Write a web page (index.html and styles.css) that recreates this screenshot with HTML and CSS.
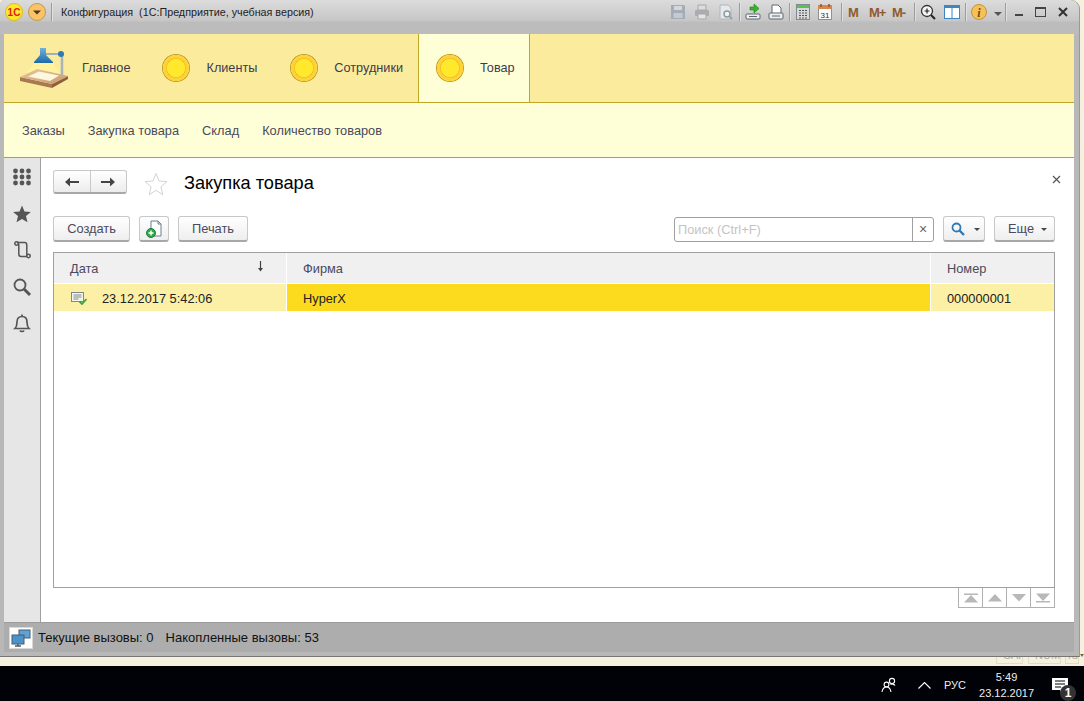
FILE: index.html
```html
<!DOCTYPE html>
<html>
<head>
    <meta charset="utf-8">
    <title>Конфигурация (1С:Предприятие, учебная версия)</title>
    <link rel="stylesheet" href="styles.css">
</head>
<body>
<div class="screen">
    <div class="window">
        <!-- title bar -->
        <div class="titlebar">
            <svg class="logo" width="18" height="18" viewBox="0 0 18 18">
                <circle cx="9" cy="9" r="8.5" fill="#fde82c" stroke="#e2b91c"/>
                <text x="9" y="12.5" class="logo-text" text-anchor="middle">1С</text>
            </svg>
            <svg class="menu-btn" width="18" height="18" viewBox="0 0 18 18">
                <circle cx="9" cy="9" r="8.5" fill="#fbc266" stroke="#bd9a55"/>
                <path d="M5 7.5h8L9 11.5z" fill="#4a3a20"/>
            </svg>
            <span class="sep sep-title"></span>
            <span class="title-text">Конфигурация&nbsp; (1С:Предприятие, учебная версия)</span>

            <div class="tools">
                <div class="tool-group tool-group-g1">
                    <svg width="16" height="16" viewBox="0 0 16 16"><path d="M1 1h13l1 1v13H1z" fill="#a4adb5"/><path d="M4 2h8v4H4z" fill="#d4d8db"/><path d="M3.500 9h9v5h-9z" fill="#c4cacf"/></svg>
                    <svg width="16" height="16" viewBox="0 0 16 16"><path d="M4 1h8v5H4z" fill="#dcdcdc" stroke="#a8a8a8"/><rect x="1" y="6" width="14" height="6" rx="1" fill="#a9adb1"/><path d="M4 10h8v5H4z" fill="#e4e4e4" stroke="#a8a8a8"/></svg>
                    <svg width="16" height="16" viewBox="0 0 16 16"><path d="M2 1h8l3 3v11H2z" fill="#e6e8ea" stroke="#b0b6bb"/><circle cx="9" cy="10" r="3" fill="#eef2f4" stroke="#8a98a3" stroke-width="1.4"/><path d="M11 12l3 3" stroke="#8a98a3" stroke-width="1.6"/></svg>
                </div>
                <span class="sep"></span>
                <div class="tool-group tool-group-g2">
                    <svg width="16" height="16" viewBox="0 0 16 16"><path d="M5 3h4V0l5 4.5L9 9V6H5z" fill="#39b22d" stroke="#1e7d18" stroke-width=".6"/><rect x="1" y="10" width="14" height="5" rx="1" fill="#f0f0f0" stroke="#5d6670"/><path d="M4 12.5h8" stroke="#5d6670"/></svg>
                    <svg width="16" height="16" viewBox="0 0 16 16"><path d="M4 1h6l3 3v6H4z" fill="#fff" stroke="#5d6670"/><rect x="1" y="9" width="14" height="6" rx="1" fill="#eee" stroke="#5d6670"/><path d="M4 12h8" stroke="#5d6670"/></svg>
                </div>
                <span class="sep"></span>
                <div class="tool-group tool-group-g3">
                    <svg width="16" height="16" viewBox="0 0 16 16"><rect x="1.5" y=".5" width="13" height="15" fill="#d6dadd" stroke="#7f8a92"/><rect x="2" y="1" width="12" height="3" fill="#5cc04e"/><path d="M4 6h2v1H4zm3 0h2v1H7zm3 0h2v1h-2zM4 8.500h2v1H4zm3 0h2v1H7zm3 0h2v1h-2zM4 11h2v1H4zm3 0h2v1H7zm3 0h2v1h-2zM4 13.500h2v1H4zm3 0h2v1H7zm3 0h2v1h-2z" fill="#555"/></svg>
                    <svg width="16" height="16" viewBox="0 0 16 16"><rect x="1.500" y="1.500" width="13" height="14" fill="#fbfbfb" stroke="#8d8f90"/><rect x="1" y="1" width="14" height="4" fill="#d8844b"/><path d="M4 0v3M12 0v3" stroke="#8a5230" stroke-width="1.500"/><text x="8" y="13.500" class="cal-text" text-anchor="middle">31</text></svg>
                </div>
                <span class="sep"></span>
                <div class="mem">
                    <span class="mem-m">M</span>
                    <span class="mem-plus">M+</span>
                    <span class="mem-minus">M-</span>
                </div>
                <span class="sep"></span>
                <div class="tool-group tool-group-g5">
                    <svg width="16" height="16" viewBox="0 0 16 16"><circle cx="7" cy="7" r="5.500" fill="#f6f6f6" stroke="#333" stroke-width="1.300"/><path d="M4.500 7h5M7 4.500v5" stroke="#222" stroke-width="1.200"/><path d="M11 11l4 4" stroke="#222" stroke-width="2"/></svg>
                    <svg width="16" height="16" viewBox="0 0 16 16"><rect x=".5" y="1.500" width="15" height="13" fill="#fff" stroke="#3c86c4"/><rect x="1" y="2" width="14" height="2" fill="#3c86c4"/><path d="M8 3v11" stroke="#3c86c4"/></svg>
                </div>
                <span class="sep"></span>
                <svg width="16" height="16" viewBox="0 0 16 16"><circle cx="8" cy="8" r="7.500" fill="#f6c156" stroke="#c49238"/><text x="8" y="12.500" class="info-text" text-anchor="middle">i</text></svg>
                <svg class="info-arrow" width="8" height="5" viewBox="0 0 8 5"><path d="M0 0h8L4 4z" fill="#555"/></svg>
                <span class="sep sep-end"></span>
                <span class="win-min"></span>
                <span class="win-max"></span>
                <svg class="win-close" width="10" height="10" viewBox="0 0 10 10"><path d="M1 1l8 8M9 1l-8 8" stroke="#333" stroke-width="2"/></svg>
            </div>
        </div>

        <div class="client">
            <!-- sections -->
            <div class="tabs">
                <div class="tab tab-main">
                    <svg width="48" height="42" viewBox="0 0 48 42">
                        <defs>
                            <linearGradient id="wood" x1="0" y1="0" x2="1" y2="1"><stop offset="0" stop-color="#e8c79c"/><stop offset="1" stop-color="#c89a6c"/></linearGradient>
                            <linearGradient id="shade" x1="0" y1="0" x2="0" y2="1"><stop offset="0" stop-color="#6fb2de"/><stop offset="1" stop-color="#1f6aa5"/></linearGradient>
                        </defs>
                        <path d="M15 15h17l8 11H6z" fill="#fff3a0"/>
                        <path d="M0 30l32 7v4L0 34z" fill="#a87a52"/>
                        <path d="M32 37l16-8v3L32 41z" fill="#8c6040"/>
                        <path d="M0 30l17-8 31 7-16 8z" fill="url(#wood)"/>
                        <path d="M8 29.500l11-5 20 4-9 5.500z" fill="#fdf7e0"/>
                        <path d="M25 7h16" stroke="#9fb0bb" stroke-width="2"/>
                        <path d="M42 8v20" stroke="#a8b4bc" stroke-width="2.500"/>
                        <circle cx="41" cy="7" r="3" fill="#2c79b3"/>
                        <path d="M20 1h6v7l7 7v1H14v-1l6-7z" fill="url(#shade)"/>
                    </svg>
                    <span>Главное</span>
                </div>
                <div class="tab"><span class="bullet"></span><span>Клиенты</span></div>
                <div class="tab"><span class="bullet"></span><span>Сотрудники</span></div>
                <div class="tab tab-active"><span class="bullet"></span><span>Товар</span></div>
            </div>
            <div class="subnav">
                <span>Заказы</span>
                <span>Закупка товара</span>
                <span>Склад</span>
                <span>Количество товаров</span>
            </div>

            <div class="workspace">
                <div class="rail">
                    <svg width="20" height="20" viewBox="0 0 20 20" fill="#555">
                        <circle cx="3.500" cy="4" r="2.400"/><circle cx="10" cy="4" r="2.400"/><circle cx="16.500" cy="4" r="2.400"/>
                        <circle cx="3.500" cy="10" r="2.400"/><circle cx="10" cy="10" r="2.400"/><circle cx="16.500" cy="10" r="2.400"/>
                        <circle cx="3.500" cy="16" r="2.400"/><circle cx="10" cy="16" r="2.400"/><circle cx="16.500" cy="16" r="2.400"/>
                    </svg>
                    <svg width="20" height="20" viewBox="0 0 20 20"><path d="M10 1.500l2.500 5.900 6.400.5-4.900 4.200 1.500 6.200L10 15l-5.500 3.300L6 12.100 1.100 7.900l6.400-.5z" fill="#555"/></svg>
                    <svg width="20" height="20" viewBox="0 0 20 20" fill="none" stroke="#555" stroke-width="1.500"><path d="M5 2.500h8c1.500 0 1.800 1.500 1.800 3v8.500c0 1.500.8 2.500 2 2.500H9c-1.500 0-2.200-1-2.200-2.500V5.500C6.800 4 6.500 2.500 5 2.500z"/><circle cx="4.500" cy="3.500" r="1.700" fill="#e6e6e6"/><circle cx="16.500" cy="16" r="1.700" fill="#e6e6e6"/></svg>
                    <svg width="20" height="20" viewBox="0 0 20 20" fill="none" stroke="#555"><circle cx="8" cy="8" r="5.500" stroke-width="1.800"/><path d="M12 12l6 6" stroke-width="3"/></svg>
                    <svg width="20" height="20" viewBox="0 0 20 20" fill="none" stroke="#555" stroke-width="1.700"><path d="M3 15.500c1.500-1.500 2-3 2-6.500 0-3.500 2-5.500 5-5.500s5 2 5 5.500c0 3.500.5 5 2 6.500z"/><path d="M10 1.500v2M8 17.500c.5 1.300 3.500 1.300 4 0"/></svg>
                </div>

                <div class="form">
                    <div class="form-head">
                        <div class="nav-buttons">
                            <button class="nav-btn"><svg width="16" height="12" viewBox="0 0 16 12"><path d="M1 6l5-4.500V5h9v2H6v3.500z" fill="#444"/></svg></button>
                            <button class="nav-btn"><svg width="16" height="12" viewBox="0 0 16 12"><path d="M15 6l-5-4.500V5H1v2h9v3.500z" fill="#444"/></svg></button>
                        </div>
                        <svg class="fav" width="24" height="24" viewBox="0 0 24 24"><path d="M12 1.500l3 7.500 8 .6-6.100 5.200 1.900 7.800L12 18.400l-6.800 4.200 1.900-7.800L1 9.600 9 9z" fill="#fff" stroke="#d4d4d4"/></svg>
                        <h1>Закупка товара</h1>
                        <svg class="form-close" width="9" height="9" viewBox="0 0 9 9"><path d="M1 1l7 7M8 1L1 8" stroke="#555" stroke-width="1.200"/></svg>
                    </div>

                    <div class="toolbar">
                        <button class="btn btn-create">Создать</button>
                        <button class="btn btn-icon">
                            <svg width="18" height="18" viewBox="0 0 18 18"><path d="M6 1h7l3 3v12H6z" fill="#fff" stroke="#6f7f8c"/><path d="M13 1v3h3" fill="none" stroke="#6f7f8c"/><circle cx="6" cy="13" r="4.500" fill="#2fa84a" stroke="#1c7c33"/><path d="M3.500 13h5M6 10.500v5" stroke="#fff" stroke-width="1.400"/></svg>
                        </button>
                        <button class="btn btn-print">Печать</button>
                        <div class="search">
                            <input type="text" placeholder="Поиск (Ctrl+F)">
                            <span class="search-clear">×</span>
                        </div>
                        <button class="btn btn-find">
                            <svg width="14" height="14" viewBox="0 0 14 14" fill="none" stroke="#2f7ab5"><circle cx="5.500" cy="5.500" r="4" stroke-width="1.800"/><path d="M8.500 8.500l4.500 4.500" stroke-width="2.400"/></svg>
                            <span class="caret"></span>
                        </button>
                        <button class="btn btn-more">Еще<span class="caret"></span></button>
                    </div>

                    <div class="grid">
                        <div class="grid-row grid-head">
                            <div class="cell cell-date">
                                Дата
                                <svg class="sort" width="7" height="11" viewBox="0 0 7 11"><path d="M3.500 0v9" stroke="#444" stroke-width="1.200"/><path d="M1 7h5l-2.500 3.500z" fill="#444"/></svg>
                            </div>
                            <div class="cell">Фирма</div>
                            <div class="cell">Номер</div>
                        </div>
                        <div class="grid-row grid-item">
                            <div class="cell cell-date">
                                <svg width="16" height="14" viewBox="0 0 16 14"><rect x=".5" y="1.500" width="12" height="9" fill="#f4f4f0" stroke="#7d8a8a"/><path d="M2.500 4h8M2.500 6h8M2.500 8h5" stroke="#7d8a8a"/><path d="M8.500 10.500l2.500 2.500 4.500-5" fill="none" stroke="#3aa53a" stroke-width="1.800"/></svg>
                                <span>23.12.2017 5:42:06</span>
                            </div>
                            <div class="cell cell-current">HyperX</div>
                            <div class="cell">000000001</div>
                        </div>
                    </div>

                    <div class="pager">
                        <span class="page-btn"><svg width="14" height="10" viewBox="0 0 14 10"><path d="M0 .5h14v1.500H0zM7 2l7 7.500H0z" fill="#b8b8b8"/></svg></span>
                        <span class="page-btn"><svg width="14" height="8" viewBox="0 0 14 8"><path d="M7 0l7 7.500H0z" fill="#b8b8b8"/></svg></span>
                        <span class="page-btn"><svg width="14" height="8" viewBox="0 0 14 8"><path d="M7 7.500L14 0H0z" fill="#b8b8b8"/></svg></span>
                        <span class="page-btn"><svg width="14" height="10" viewBox="0 0 14 10"><path d="M0 8h14v1.500H0zM7 8L14 .5H0z" fill="#b8b8b8"/></svg></span>
                    </div>
                </div>
            </div>

            <div class="statusbar">
                <span class="status-btn">
                    <svg width="20" height="18" viewBox="0 0 20 18">
                        <rect x="8" y="1" width="11" height="8" fill="#5ea3d6" stroke="#4d5d6a"/>
                        <rect x="1" y="6" width="12" height="9" fill="#4c93cb" stroke="#4d5d6a"/>
                        <path d="M4 17h6M7 15v2" stroke="#4d5d6a" stroke-width="1.500"/>
                    </svg>
                </span>
                <span class="status-calls">Текущие вызовы: 0</span>
                <span>Накопленные вызовы: 53</span>
            </div>
        </div>
    </div>

    <!-- what is left of the window behind -->
    <div class="peek">
        <span class="peek-cell peek-caps"><b>CAP</b></span>
        <span class="peek-cell peek-num"><b>NUM</b></span>
        <span class="peek-cell peek-lang"><b>ru</b></span>
        <span class="peek-mark"></span>
    </div>

    <div class="taskbar">
        <svg class="tray-people" width="16" height="16" viewBox="0 0 16 16" fill="none" stroke="#fff" stroke-width="1.100"><circle cx="11" cy="4" r="2.600"/><circle cx="5.500" cy="7.500" r="2.400"/><path d="M1 15c.5-3 2-5 4.500-5s4 2 4.500 5M9.500 7.500c1-.7 3.500-.7 4.500 1"/></svg>
        <svg class="tray-up" width="13" height="7" viewBox="0 0 13 7"><path d="M.5 6.500l6-6 6 6" fill="none" stroke="#fff" stroke-width="1.100"/></svg>
        <span class="tray-lang">РУС</span>
        <div class="clock">
            <span>5:49</span>
            <span>23.12.2017</span>
        </div>
        <div class="notify">
            <svg width="16" height="14" viewBox="0 0 16 14"><path d="M0 0h16v12h-6l-2 2v-2H0z" fill="#fff"/><path d="M3 3h10M3 6h10M3 9h6" stroke="#000" stroke-width="1"/></svg>
            <span class="notify-badge">1</span>
        </div>
    </div>
</div>
</body>
</html>
```

FILE: styles.css
```css
* {
    box-sizing: border-box;
}

html, body {
    margin: 0;
    height: 100%;
    overflow: hidden;
}

body {
    font-family: "Liberation Sans", Arial, sans-serif;
    font-size: 12.8px;
    background: #f5f1de;
}

svg {
    display: block;
    flex: none;
}

button {
    font: inherit;
}

.screen {
    display: flex;
    flex-direction: column;
    height: 701px;
}

.window {
    display: flex;
    flex-direction: column;
    width: 1080px;
    height: 657px;
    padding: 0 5px 0 4px;
    background: #b4b4b4;
    background-image: linear-gradient(#dcdcdc, #c6c6c6 21px, #bcbcbc 22px, #bcbcbc 34px, #b8b8b8 35px);
    border-right: 1px solid #9a9a9a;
    border-bottom: 1px solid #767676;
    border-radius: 5px 9px 0 0;
}

/* title bar */
.titlebar {
    display: flex;
    align-items: center;
    flex: none;
    height: 34px;
    padding-bottom: 10px;
    color: #222;
    font-size: 10.75px;
}

.logo {
    margin-left: 1px;
}

.logo-text {
    font: bold 10px "Liberation Sans", sans-serif;
    fill: #e0201a;
}

.menu-btn {
    margin-left: 5px;
}

.sep {
    flex: none;
    width: 1px;
    height: 18px;
    margin: 0 5px;
    background: #9c9c9c;
    box-shadow: 1px 0 0 #e0e0e0;
}

.sep-title {
    margin: 0 9px 0 5px;
}

.title-text {
    white-space: nowrap;
}

.tools {
    display: flex;
    align-items: center;
    margin-left: auto;
    padding-right: 6px;
}

.tool-group {
    display: flex;
    align-items: center;
}

.tool-group-g1 {
    gap: 8px;
}

.tool-group-g2 {
    gap: 7px;
}

.tool-group-g3 {
    gap: 6px;
    margin-right: 3px;
}

.tool-group-g5 {
    gap: 8px;
}

.cal-text {
    font: 8px "Liberation Sans", sans-serif;
    fill: #333;
}

.info-text {
    font: italic bold 12px "Liberation Serif", serif;
    fill: #6b4a14;
}

.mem {
    display: flex;
    padding: 0 1px;
    color: #8f5a2e;
    font-size: 13px;
    font-weight: bold;
    letter-spacing: -1px;
    white-space: nowrap;
}

.mem-m {
    width: 21px;
}

.mem-plus {
    width: 23px;
}

.mem-minus {
    width: 16px;
}

.info-arrow {
    margin: 4px 0 0 7px;
}

.sep-end {
    margin: 0 9px 0 3px;
}

.win-min {
    width: 8px;
    height: 2px;
    margin-top: 6px;
    background: #444;
}

.win-max {
    width: 11px;
    height: 10px;
    margin-left: 12px;
    border: 1px solid #444;
    border-top-width: 2px;
}

.win-close {
    margin-left: 12px;
}

/* client area */
.client {
    display: flex;
    flex-direction: column;
    flex: 1;
    min-height: 0;
}

.tabs {
    display: flex;
    flex: none;
    height: 69px;
    background: #fbeb9d;
    border-bottom: 1px solid #c1a726;
    color: #3c3c50;
    font-size: 12.7px;
}

.tab {
    display: flex;
    align-items: center;
    gap: 16px;
    padding: 0 14px 0 17px;
    border: solid transparent;
    border-width: 0 1px;
    white-space: nowrap;
}

.tab-main {
    gap: 14px;
    padding: 0 13px 0 15px;
}

.tab-active {
    background: #ffffd7;
    border-color: #c1a726;
    margin-bottom: -1px;
    border-bottom: 1px solid #c1a726;
}

.bullet {
    flex: none;
    width: 28px;
    height: 28px;
    border-radius: 50%;
    background: radial-gradient(circle closest-side, #ffe92a 0 63%, #f3c52b 66% 71%, #fdd23a 74% 93%, #c2a01e 96%);
}

.subnav {
    display: flex;
    align-items: center;
    gap: 23px;
    flex: none;
    height: 55px;
    padding: 1px 0 0 18px;
    background: #ffffd7;
    border-bottom: 1px solid #9a9a9a;
    color: #4a4a5a;
}

.workspace {
    display: flex;
    flex: 1;
    min-height: 0;
}

.rail {
    display: flex;
    flex-direction: column;
    align-items: center;
    gap: 16.500px;
    flex: none;
    width: 37px;
    padding: 9px 1px 0 0;
    background: #e6e6e6;
    border-right: 1px solid #a0a0a0;
}

.form {
    display: flex;
    flex-direction: column;
    flex: 1;
    min-width: 0;
    padding: 12px 19px 14px 12px;
    background: #fff;
}

.form-head {
    display: flex;
    align-items: center;
    flex: none;
    height: 24px;
    margin-bottom: 22px;
}

.nav-buttons {
    display: flex;
    width: 74px;
    height: 24px;
    background: linear-gradient(#fff, #ececec);
    border: 1px solid #c8c8c8;
    border-bottom: 2px solid #a8a8a8;
    border-radius: 3px;
}

.nav-btn {
    display: flex;
    align-items: center;
    justify-content: center;
    flex: 1;
    padding: 0;
    background: none;
    border: 0;
}

.nav-btn + .nav-btn {
    border-left: 1px solid #c8c8c8;
}

.fav {
    margin: 3px 0 0 17px;
}

h1 {
    margin: 3px 0 0 16px;
    color: #000;
    font-size: 18.200px;
    font-weight: normal;
}

.form-close {
    margin: -6px -6px 0 auto;
}

.toolbar {
    display: flex;
    align-items: center;
    flex: none;
    height: 26px;
    margin-bottom: 10px;
}

.btn {
    display: flex;
    align-items: center;
    justify-content: center;
    height: 26px;
    padding: 0;
    background: linear-gradient(#fff, #eeeeee);
    border: 1px solid #c8c8c8;
    border-bottom: 2px solid #a8a8a8;
    border-radius: 3px;
    color: #4a4a5e;
}

.btn-create {
    width: 77px;
}

.btn-icon {
    width: 30px;
    margin-left: 9px;
}

.btn-print {
    width: 70px;
    margin-left: 9px;
}

.search {
    display: flex;
    width: 260px;
    height: 25px;
    margin-left: auto;
    border: 1px solid #a0a0a0;
    border-radius: 3px;
}

.search input {
    flex: 1;
    min-width: 0;
    padding: 0 3px;
    border: 0;
    border-radius: 3px 0 0 3px;
    font: inherit;
    background: none;
}

.search input::placeholder {
    color: #c4c4c4;
    opacity: 1;
}

.search-clear {
    display: flex;
    align-items: center;
    justify-content: center;
    width: 21px;
    border-left: 1px solid #a0a0a0;
    color: #666;
    font-size: 14px;
}

.btn-find {
    gap: 9px;
    width: 42px;
    margin-left: 9px;
    padding-left: 2px;
}

.btn-more {
    gap: 7px;
    width: 61px;
    margin-left: 9px;
    padding-left: 6px;
}

.caret {
    width: 0;
    height: 0;
    margin-top: 2px;
    border: 3px solid transparent;
    border-top: 3px solid #444;
    border-bottom: 0;
}

/* list */
.grid {
    flex: 1;
    min-height: 0;
    background: #fff;
    border: 1px solid #a0a0a0;
}

.grid-row {
    display: grid;
    grid-template-columns: 233px 644px 1fr;
}

.cell {
    display: flex;
    align-items: center;
    padding-left: 16px;
    border-right: 1px solid #fff;
}

.cell:last-child {
    border-right: 0;
}

.grid-head {
    height: 31px;
    padding-bottom: 1px;
    background: #f0f0f0;
    border-bottom: 1px solid #fff;
    color: #4a4a5e;
}

.grid-head .cell {
    margin-bottom: -1px;
    background: #f0f0f0;
}

.grid-item {
    height: 28px;
    border-bottom: 1px solid #fff;
    color: #222;
}

.grid-item .cell {
    padding-top: 1px;
    background: #fcf0a6;
}

.grid-item .cell-current {
    background: #fcda1e;
}

.grid-item .cell-date {
    gap: 15px;
    padding-left: 17px;
}

.sort {
    margin: -3px 22px 0 auto;
}

.pager {
    display: flex;
    flex: none;
    align-self: flex-end;
    height: 20px;
    border: 1px solid #b0b0b0;
    border-top: 0;
}

.page-btn {
    display: flex;
    align-items: center;
    justify-content: center;
    width: 24px;
    border-left: 1px solid #b0b0b0;
}

.page-btn:first-child {
    width: 23px;
    border-left: 0;
}

/* status bar */
.statusbar {
    display: flex;
    align-items: center;
    flex: none;
    height: 30px;
    margin-bottom: 4px;
    padding-left: 5px;
    background: #adadad;
    border-top: 1px solid #9c9c9c;
    color: #111;
    font-size: 13px;
}

.status-btn {
    display: flex;
    align-items: center;
    justify-content: center;
    width: 24px;
    height: 22px;
    margin-right: 5px;
    background: #fff;
    border: 1px solid #d8d8d8;
}

.status-calls {
    margin-right: 12px;
}

/* window behind */
.peek {
    display: flex;
    justify-content: flex-end;
    flex: none;
    height: 9px;
    color: #b4ae98;
    font-size: 11px;
}

.peek-cell {
    display: block;
    height: 7px;
    overflow: hidden;
    padding-left: 6px;
    border: solid #e2dcc4;
    border-width: 0 1px 1px;
}

.peek-cell b {
    display: block;
    margin-top: -8px;
    font-weight: normal;
}

.peek-caps {
    width: 27px;
}

.peek-num {
    width: 33px;
    margin-left: 5px;
}

.peek-lang {
    width: 14px;
    margin-left: 4px;
    padding-left: 2px;
}

.peek-mark {
    width: 0;
    height: 0;
    margin: -3px 0 0 1px;
    border: 2px solid transparent;
    border-top: 3px solid #7a6a30;
    border-bottom: 0;
}

/* taskbar */
.taskbar {
    display: flex;
    align-items: center;
    flex: 1;
    padding-left: 881px;
    background: #000207;
    color: #eee;
    font-size: 11px;
}

.tray-people {
    margin-top: 3px;
}

.tray-up {
    margin: 4px 0 0 21px;
}

.tray-lang {
    margin: 3px 0 0 13px;
}

.clock {
    display: flex;
    flex-direction: column;
    align-items: center;
    gap: 3px;
    margin: 3px 0 0 13px;
    line-height: 13px;
}

.notify {
    position: relative;
    margin: 3px 0 0 18px;
}

.notify-badge {
    position: absolute;
    top: 7px;
    left: 8px;
    width: 16px;
    height: 16px;
    background: #333;
    border-radius: 50%;
    color: #fff;
    font-size: 12px;
    font-weight: bold;
    line-height: 16px;
    text-align: center;
}
```
